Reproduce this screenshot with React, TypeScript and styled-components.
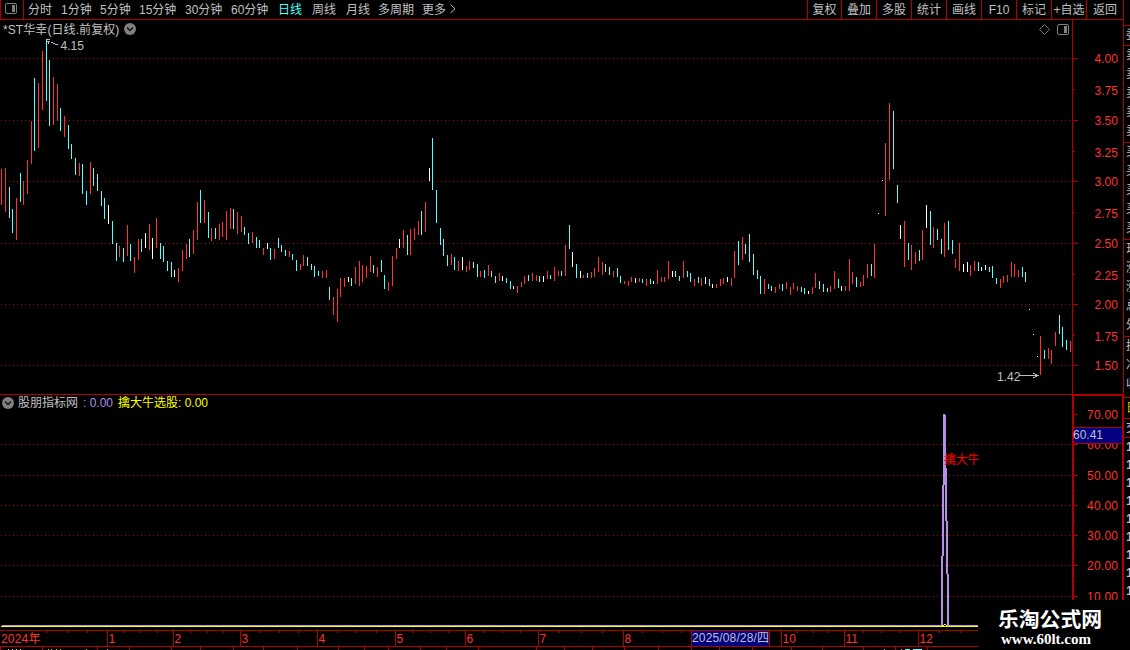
import React from "react";
import styled, { createGlobalStyle } from "styled-components";

const LINE = "#b00000";
const RED = "#ff3232";
const CYAN = "#54ffff";
const GREY = "#c0c0c0";
const PURPLE = "#b48ee8";
const FONT = '"Liberation Sans", "Noto Sans CJK SC", sans-serif';

const GlobalStyle = createGlobalStyle`
  body { margin: 0; background: #000; overflow: hidden; }
  svg { display: block; flex: none; }
`;

const Screen = styled.div`
  position: relative;
  display: flex;
  width: 1130px;
  height: 650px;
  overflow: hidden;
  background: #000;
  color: ${GREY};
  font: 12px/18px ${FONT};
  white-space: nowrap;
`;

const Main = styled.main`
  display: flex;
  flex-direction: column;
  width: 1123px;
  flex: none;
`;

const Toolbar = styled.header`
  box-sizing: border-box;
  display: flex;
  height: 20px;
  border-bottom: 1px solid ${LINE};
  line-height: 20px;
`;

const LayoutToggle = styled.div`
  box-sizing: border-box;
  width: 24px;
  height: 19px;
  padding: 3px 0 0 4px;
  border: solid ${LINE};
  border-width: 0 1px;
`;

const Periods = styled.nav`
  display: flex;
  flex: 1;
  height: 19px;
  padding-left: 4px;
`;

const Period = styled.span<{ $w: number; $active?: boolean }>`
  width: ${(p) => p.$w}px;
  color: ${(p) => (p.$active ? CYAN : GREY)};
`;

const MoreArrow = styled.span`
  padding-top: 4px;
`;

const Action = styled.span<{ $w: number }>`
  box-sizing: border-box;
  width: ${(p) => p.$w}px;
  height: 19px;
  border-left: 1px solid ${LINE};
  text-align: center;
`;

const Panel = styled.section`
  display: flex;
`;

const PlotColumn = styled.div<{ $divider?: boolean }>`
  display: flex;
  flex-direction: column;
  width: 1072px;
  border-bottom: ${(p) => (p.$divider ? `1px solid ${LINE}` : "none")};
`;

const PanelHeader = styled.div<{ $h: number; $left: number }>`
  box-sizing: border-box;
  display: flex;
  align-items: center;
  height: ${(p) => p.$h}px;
  padding-bottom: 1px;
  padding-left: ${(p) => p.$left}px;
`;

const StockName = styled.span`
  width: 121px;
  padding-top: 1px;
  letter-spacing: 0.08px;
`;

const HeaderTools = styled.div`
  display: flex;
  gap: 7px;
  margin-left: auto;
  padding-right: 3px;
`;

const Reading = styled.span<{ $color: string; $w?: number; $gap?: number }>`
  color: ${(p) => p.$color};
  width: ${(p) => (p.$w ? `${p.$w}px` : "auto")};
  margin-left: ${(p) => p.$gap ?? 0}px;
`;

const Side = styled.aside`
  box-sizing: border-box;
  width: 7px;
  flex: none;
  overflow: hidden;
  padding-top: 25px;
  border-left: 1px solid ${LINE};
`;

const QuoteGroup = styled.div<{ $h: number; $color?: string; $step?: number }>`
  box-sizing: border-box;
  height: ${(p) => p.$h}px;
  overflow: hidden;
  padding-left: 2px;
  border-top: 1px solid ${LINE};
  color: ${(p) => p.$color ?? GREY};
  line-height: ${(p) => p.$step ?? 19}px;
`;

const QuoteRow = styled.div`
  width: 40px;
`;

const TickRow = styled(QuoteRow)`
  font-weight: bold;
  font-size: 13px;
`;

const Watermark = styled.div`
  position: absolute;
  left: 978px;
  top: 600px;
  width: 152px;
  height: 50px;
  display: flex;
  flex-direction: column;
  background: #000;
  color: #fff;
`;

const SiteName = styled.div`
  padding: 6px 0 0 20px;
  font: bold 20.8px/25px "Noto Sans CJK SC", sans-serif;
`;

const SiteUrl = styled.div`
  padding-left: 23px;
  font: bold 15px/16px "Liberation Serif", serif;
`;

type Bar = [number, number, number, string];

// x, high, low, colour code (r = up, c = down, w = unchanged)
const BAR_DATA = `
1 169 205 r;5 168 212 r;9 187 218 c;12 209 233 c;16 198 240 r;20 173 202 c;23 181 205 r;27 160 194 r;31 121 164 r;34 78 151 c;
38 83 148 r;42 51 110 r;46 40 101 c;49 60 126 c;53 77 125 r;57 84 121 r;60 108 131 c;64 116 137 r;68 125 149 c;71 144 159 c;
75 158 175 c;79 163 176 r;82 164 194 c;86 191 205 c;90 162 194 r;93 168 186 c;97 174 191 c;101 191 206 c;104 198 219 c;108 205 224 w;
112 221 244 c;116 243 261 c;119 246 257 r;123 248 262 c;127 225 256 r;130 244 261 c;134 257 273 r;138 239 260 r;141 239 252 c;145 233 248 w;
149 224 250 r;152 238 259 w;156 218 248 r;160 243 259 c;163 246 262 c;167 261 271 c;171 262 277 c;174 270 277 w;178 268 282 r;182 250 271 r;
186 244 259 r;189 239 257 c;193 230 254 r;197 202 240 r;200 190 223 c;204 200 223 r;208 212 238 c;211 228 241 r;215 228 239 c;219 224 240 r;
222 222 237 r;226 211 240 r;230 208 229 r;233 209 229 c;237 212 234 r;241 216 232 r;244 227 235 c;248 233 244 c;252 232 243 r;256 237 248 c;
259 240 248 c;263 248 255 r;267 243 249 w;270 248 260 c;274 249 259 r;278 238 248 c;281 245 252 c;285 250 256 c;289 251 257 r;292 254 260 c;
296 260 271 c;300 264 270 r;303 255 266 r;307 257 266 c;311 264 270 c;314 266 277 c;318 271 276 c;322 271 278 r;326 270 278 r;329 287 300 c;
333 297 315 r;337 289 322 r;340 278 297 r;344 278 287 r;348 277 282 w;351 278 286 c;355 267 284 r;359 261 286 r;362 265 282 r;366 266 278 r;
370 256 272 r;373 265 273 c;377 267 277 r;381 260 272 c;384 275 289 c;388 282 291 r;392 256 286 r;396 248 259 r;399 239 248 w;403 230 248 r;
407 235 255 c;410 229 255 r;414 228 240 r;418 221 235 r;421 211 235 c;425 202 232 r;429 168 181 w;432 138 190 c;436 190 223 c;440 228 245 c;
443 239 256 c;447 255 266 c;451 254 265 r;454 257 270 c;458 261 271 r;462 257 270 w;466 266 272 r;469 261 270 r;473 262 268 c;477 264 277 c;
480 271 277 r;484 270 278 c;488 265 276 r;491 271 277 c;495 276 283 c;499 273 281 r;502 276 281 w;506 278 283 c;510 281 289 c;513 286 289 w;
517 286 293 r;521 282 287 r;524 276 284 r;528 275 281 c;532 273 281 r;536 275 281 r;539 276 282 c;543 276 282 w;547 271 279 r;550 275 279 c;
554 267 281 r;558 271 276 r;561 271 276 c;565 245 276 r;569 225 249 c;572 252 267 w;576 264 278 c;580 271 278 w;583 275 278 r;587 273 278 c;
591 272 278 r;594 268 277 r;598 257 272 r;602 262 275 r;605 264 272 c;609 267 275 c;613 271 277 r;617 268 277 c;620 276 283 c;624 281 284 r;
628 281 286 r;631 277 282 r;635 278 283 w;639 278 282 r;642 279 283 c;646 279 286 r;650 279 284 c;653 281 284 w;657 270 284 r;661 277 282 r;
664 277 282 r;668 261 279 r;672 271 277 w;675 271 277 c;679 276 281 c;683 261 278 r;687 271 277 c;690 273 282 c;694 279 286 r;698 277 283 c;
701 278 286 r;705 277 284 w;709 279 286 c;712 284 288 w;716 284 288 r;720 279 286 r;723 278 284 r;727 277 282 w;731 278 286 r;734 251 278 r;
738 241 265 c;742 237 260 r;745 244 254 c;749 234 262 c;753 254 275 c;757 270 279 c;760 276 294 c;764 279 294 r;768 284 289 c;771 286 291 c;
775 287 293 r;779 284 289 r;782 284 291 c;786 282 289 r;790 287 295 r;793 283 289 r;797 286 291 r;801 287 292 c;804 288 294 c;808 291 294 w;
812 287 294 r;815 273 288 r;819 281 289 c;823 284 292 c;827 288 292 c;830 286 292 r;834 271 289 r;838 279 288 c;841 286 291 w;845 286 291 r;
849 259 291 r;852 272 284 r;856 277 287 c;860 282 287 r;863 275 286 r;867 264 278 r;871 264 276 c;874 244 278 r;878 213 214 w;882 180 181 w;
885 143 216 r;889 103 180 r;893 111 169 c;897 185 203 c;900 225 239 w;904 221 267 r;908 243 260 c;911 245 270 r;915 252 264 r;919 250 261 c;
922 230 260 r;926 205 228 w;930 211 245 c;933 227 248 r;937 229 240 c;941 239 254 c;944 223 257 r;948 221 250 c;952 240 254 c;955 259 268 r;
959 243 271 r;963 264 272 w;967 262 272 w;970 265 276 r;974 261 271 r;978 262 271 c;981 267 271 w;985 265 270 w;989 267 272 c;992 266 278 c;
996 278 284 c;1000 279 288 r;1003 276 283 r;1007 275 282 r;1011 262 277 r;1014 264 277 r;1018 270 277 r;1022 267 277 c;1025 272 282 c;1029 309 310 w;
1033 334 335 w;1037 356 357 w;1040 336 375 r;1044 350 359 c;1048 348 359 r;1051 350 364 r;1055 332 346 r;1059 315 334 c;1062 327 347 c;1066 340 350 c;
1070 341 352 r`;

const BAR_COLORS: Record<string, string> = { r: RED, c: CYAN, w: "#ffffff" };

const bars: Bar[] = BAR_DATA.split(";").map((item) => {
  const [x, high, low, code] = item.trim().split(" ");
  return [Number(x), Number(high), Number(low), BAR_COLORS[code]];
});

const periods: [string, number][] = [
  ["分时", 33], ["1分钟", 39], ["5分钟", 39], ["15分钟", 46], ["30分钟", 46], ["60分钟", 47],
  ["日线", 34], ["周线", 34], ["月线", 32], ["多周期", 44], ["更多", 28],
];

const actions: [string, number][] = [
  ["复权", 34], ["叠加", 35], ["多股", 35], ["统计", 35], ["画线", 35],
  ["F10", 35], ["标记", 35], ["+自选", 35], ["返回", 37],
];

const priceLabels: [string, number][] = [
  ["4.00", 58], ["3.75", 90], ["3.50", 120], ["3.25", 152], ["3.00", 181], ["2.75", 213],
  ["2.50", 243], ["2.25", 275], ["2.00", 304], ["1.75", 336], ["1.50", 365],
];
const priceGrid = [58, 120, 181, 243, 304, 365];
const priceMinor = [89, 151, 212, 274, 335];

const levelLabels: [string, number][] = [
  ["70.00", 414], ["60.00", 444], ["50.00", 475], ["40.00", 505], ["30.00", 535], ["20.00", 565], ["10.00", 596],
];
const levelGrid = [444, 475, 505, 535, 565, 596];
const levelMinor = [460, 490, 520, 550, 581];

const months: [string, number][] = [
  ["1", 107], ["2", 173], ["3", 240], ["4", 317], ["5", 395], ["6", 465], ["7", 538], ["8", 623],
  ["10", 781], ["11", 844], ["12", 918],
];
const weekTicks = [
  46, 67, 87, 124, 140, 157, 190, 207, 223, 260, 279, 298, 337, 356, 376, 413, 430, 448, 483, 502, 520,
  559, 581, 602, 642, 662, 681, 797, 813, 828, 863, 881, 900, 939, 960,
];
const tabTicks = [
  0, 42, 97, 129, 171, 200, 233, 263, 297, 338, 364, 388, 420, 446, 478, 536, 564, 592, 624, 658, 691,
  719, 752, 791, 822, 863, 895, 927,
];
const tabMarks: [number, number, string][] = [
  [8, 1, GREY], [12, 1, GREY], [16, 1, GREY], [20, 1, GREY], [48, 1, "#c8c800"], [51, 1, "#c8c800"],
  [56, 1, "#c8c800"], [60, 1, "#c8c800"], [86, 1, "#c8c800"], [107, 1, GREY], [884, 1, GREY],
  [901, 1, GREY], [905, 5, CYAN], [913, 9, CYAN],
];

const SplitIcon = () => (
  <svg width="12" height="11" viewBox="0 0 12 11">
    <rect x="0.5" y="0.5" width="11" height="10" rx="1.5" fill="none" stroke="#808080" />
    <rect x="7" y="2" width="3" height="7" fill="#808080" />
  </svg>
);

const Chevron = () => (
  <svg width="12" height="12" viewBox="0 0 12 12">
    <circle cx="6" cy="6" r="6" fill="#808080" />
    <path d="M3 4.5L6 7.5L9 4.5" fill="none" stroke="#101010" strokeWidth="1.4" />
  </svg>
);

const GridLine = ({ y }: { y: number }) => (
  <line x1="1" x2="1070" y1={y + 0.5} y2={y + 0.5} stroke="#a80808" strokeDasharray="1 3" />
);

const PriceChart = () => (
  <svg width="1072" height="355" viewBox="0 39 1072 355" fontFamily={FONT} fontSize="12" shapeRendering="crispEdges">
    {priceGrid.map((y) => <GridLine key={y} y={y} />)}
    {bars.map(([x, high, low, color]) => (
      <rect key={x} x={x} y={high} width="1" height={low - high} fill={color} />
    ))}
    <path d="M58 44.5h-3M55 43.5h-2M53 42.5h-2M50 41.5h-1M46 39.5h4M46 41.5h4M48 42.5h1M48 43.5h1" stroke={GREY} />
    <text x="60.5" y="50" fill={GREY} textLength="23.5">4.15</text>
    <text x="997" y="381" fill={GREY} textLength="23.5">1.42</text>
    <path d="M1019 375.5H1039M1037 374.5h-2M1035 373.5h-2M1037 376.5h-2M1035 377.5h-2" stroke={GREY} />
  </svg>
);

const PriceAxis = () => (
  <svg width="51" height="375" viewBox="1072 20 51 375" fontFamily={FONT} fontSize="12" fill={RED} shapeRendering="crispEdges">
    <path d="M1072.5 20V395M1072 394.5h51" stroke={LINE} />
    {priceGrid.map((y) => <rect key={y} x="1073" y={y} width="5" height="1" fill={LINE} />)}
    {priceMinor.map((y) => <rect key={y} x="1073" y={y} width="2" height="1" fill={LINE} />)}
    {priceLabels.map(([label, y]) => (
      <text key={label} x="1094.5" y={y + 5} textLength="23.5">{label}</text>
    ))}
  </svg>
);

const IndicatorChart = () => (
  <svg width="1072" height="218" viewBox="0 412 1072 218" fontFamily={FONT} fontSize="12" shapeRendering="crispEdges">
    {levelGrid.map((y) => <GridLine key={y} y={y} />)}
    <path d="M2 625.5H941M949 625.5H978" stroke={PURPLE} />
    <path
      fill={PURPLE}
      d="M943 414h2v1h1v53h1v53h1v53h1v52h-2v-52h-1v-53h-1v-36h-1v71h-1v70h-2v-70h1v-71h1z"
    />
    <path d="M1 626.5H978M942 625.5h2M944 624.5h2M946 625.5h1" stroke="#ffff00" />
    <text x="944" y="464" fill="#ff0000" textLength="35.5">擒大牛</text>
  </svg>
);

const IndicatorAxis = () => (
  <svg width="51" height="235" viewBox="1072 395 51 235" fontFamily={FONT} fontSize="12" fill={RED} shapeRendering="crispEdges">
    {levelLabels.map(([label, y]) => (
      <g key={label}>
        <rect x="1074" y={y} width="4" height="1" fill={LINE} />
        <text x="1087" y={y + 5} textLength="31">{label}</text>
      </g>
    ))}
    {levelMinor.map((y) => <rect key={y} x="1074" y={y} width="1" height="1" fill={LINE} />)}
    <path d="M1073 600V395H1123V600" fill="none" stroke={LINE} strokeWidth="2" />
    <rect x="1074" y="427" width="48" height="17" fill={LINE} />
    <rect x="1074" y="428" width="48" height="15" fill="#000080" />
    <text x="1073" y="439" fill={GREY} textLength="30">60.41</text>
  </svg>
);

const Timeline = () => (
  <svg width="1123" height="20" viewBox="0 630 1123 20" fontFamily={FONT} fontSize="12" fill={RED} shapeRendering="crispEdges">
    <path d="M0 630.5H1123M0 646.5H1123" stroke={LINE} />
    {weekTicks.map((x) => <rect key={x} x={x} y="631" width="1" height="2" fill={LINE} />)}
    {tabTicks.map((x) => <rect key={x} x={x} y="647" width="1" height="3" fill={LINE} />)}
    {tabMarks.map(([x, w, color]) => <rect key={x} x={x} y="649" width={w} height="1" fill={color} />)}
    <text x="1" y="643" textLength="39.5">2024年</text>
    {months.map(([label, x]) => (
      <g key={label}>
        <rect x={x} y="631" width="1" height="15" fill={LINE} />
        <text x={x + 1.5} y="643">{label}</text>
      </g>
    ))}
    <rect x="691.5" y="630.5" width="78" height="16" fill="#000080" stroke={LINE} />
    <text x="692" y="642" fill={GREY} textLength="77">2025/08/28/四</text>
  </svg>
);

export default function App() {
  return (
    <Screen>
      <GlobalStyle />
      <Main>
        <Toolbar>
          <LayoutToggle><SplitIcon /></LayoutToggle>
          <Periods>
            {periods.map(([label, width]) => (
              <Period key={label} $w={width} $active={label === "日线"}>{label}</Period>
            ))}
            <MoreArrow>
              <svg width="6" height="10" viewBox="0 0 6 10">
                <path d="M0.5 0.5L5 4.8L0.5 9" fill="none" stroke={GREY} />
              </svg>
            </MoreArrow>
          </Periods>
          {actions.map(([label, width]) => <Action key={label} $w={width}>{label}</Action>)}
        </Toolbar>
        <Panel>
          <PlotColumn $divider>
            <PanelHeader $h={19} $left={3}>
              <StockName>*ST华幸(日线.前复权)</StockName>
              <Chevron />
              <HeaderTools>
                <svg width="11" height="11" viewBox="0 0 11 11">
                  <path d="M5.5 0.5L10.5 5.5L5.5 10.5L0.5 5.5Z" fill="none" stroke="#808080" strokeWidth="0.9" />
                </svg>
                <SplitIcon />
              </HeaderTools>
            </PanelHeader>
            <PriceChart />
          </PlotColumn>
          <PriceAxis />
        </Panel>
        <Panel>
          <PlotColumn>
            <PanelHeader $h={17} $left={2}>
              <Chevron />
              <Reading $color={GREY} $w={65} $gap={4}>股朋指标网</Reading>
              <Reading $color={PURPLE} $w={35}>: 0.00</Reading>
              <Reading $color="#ffff00">擒大牛选股: 0.00</Reading>
            </PanelHeader>
            <IndicatorChart />
          </PlotColumn>
          <IndicatorAxis />
        </Panel>
        <Timeline />
      </Main>
      <Side>
        <QuoteGroup $h={20}><QuoteRow>委比</QuoteRow></QuoteGroup>
        <QuoteGroup $h={97}>
          {["卖五", "卖四", "卖三", "卖二", "卖一"].map((t) => <QuoteRow key={t}>{t}</QuoteRow>)}
        </QuoteGroup>
        <QuoteGroup $h={97}>
          {["买一", "买二", "买三", "买四", "买五"].map((t) => <QuoteRow key={t}>{t}</QuoteRow>)}
        </QuoteGroup>
        <QuoteGroup $h={97}>
          {["现价", "涨跌", "涨幅", "总量", "外盘"].map((t) => <QuoteRow key={t}>{t}</QuoteRow>)}
        </QuoteGroup>
        <QuoteGroup $h={61}>
          {["换手", "净资", "收益"].map((t) => <QuoteRow key={t}>{t}</QuoteRow>)}
        </QuoteGroup>
        <QuoteGroup $h={21} $color="#c8c800" $step={20}><QuoteRow>日</QuoteRow></QuoteGroup>
        <QuoteGroup $h={19} $step={18}><QuoteRow>交</QuoteRow></QuoteGroup>
        <QuoteGroup $h={163} $step={18}>
          {Array.from({ length: 9 }, (_, i) => <TickRow key={i}>1</TickRow>)}
        </QuoteGroup>
      </Side>
      <Watermark>
        <SiteName>乐淘公式网</SiteName>
        <SiteUrl>www.60lt.com</SiteUrl>
      </Watermark>
    </Screen>
  );
}
